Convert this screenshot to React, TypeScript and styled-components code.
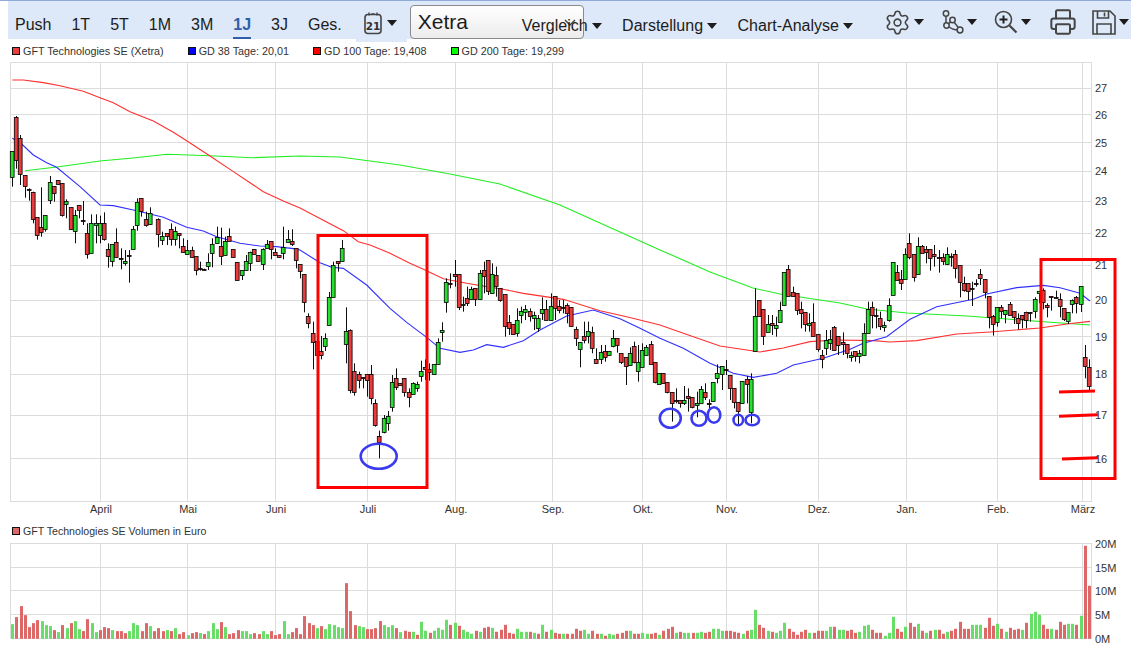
import React from 'react';
import styled, { createGlobalStyle } from 'styled-components';
import { Printer, Settings } from 'lucide-react';

const GlobalStyle = createGlobalStyle`
  html, body {
    margin: 0;
    padding: 0;
    background: #fff;
    font-family: "Liberation Sans", Arial, sans-serif;
    overflow: hidden;
  }
`;

const Page = styled.div`
  width: 1131px;
  height: 654px;
  overflow: hidden;
  border-top: 1px solid #8fa9da;
  box-sizing: border-box;
`;

const Toolbar = styled.div`
  display: flex;
  align-items: center;
  height: 38px;
  margin-left: 8px;
  padding-left: 7px;
  background: #dde8f8;
  color: #1c1c1c;
  font-size: 16px;
`;

const RangeGroup = styled.div`
  display: flex;
  gap: 20px;
`;

const RangeTab = styled.div<{ $active?: boolean }>`
  box-sizing: border-box;
  height: 38px;
  padding-top: 10px;
  line-height: 27px;
  color: ${(p) => (p.$active ? '#2f5fa8' : '#1c1c1c')};
  font-weight: ${(p) => (p.$active ? 'bold' : 'normal')};
  border-bottom: 2px solid ${(p) => (p.$active ? '#2f5fa8' : 'transparent')};
`;

const CalendarTab = styled.div`
  display: flex;
  align-items: center;
  gap: 5px;
  align-self: flex-start;
  width: 51px;
  height: 41px;
  margin-left: 14px;
  padding: 3px 0 0 8px;
  box-sizing: border-box;
  background: #dde8f8;
`;

const Caret = styled.span`
  display: inline-block;
  flex: none;
  width: 0;
  height: 0;
  border-left: 5.5px solid transparent;
  border-right: 5.5px solid transparent;
  border-top: 6px solid #1c1c1c;
`;

const ExchangeSelect = styled.div`
  position: relative;
  flex: none;
  width: 174px;
  height: 34px;
  margin: 4px 0 0 3px;
  padding-left: 7px;
  box-sizing: border-box;
  border: 1px solid #8a8a8a;
  border-radius: 4px;
  background: linear-gradient(#ffffff, #ececec);
  font-size: 21px;
  line-height: 31px;
`;

const SelectChevron = styled.svg`
  position: absolute;
  right: 7px;
  top: 13px;
`;

const MenuGroup = styled.div`
  display: flex;
  gap: 20.5px;
  margin-left: -62px;
  position: relative;
`;

const MenuItem = styled.div`
  display: flex;
  align-items: center;
  gap: 4px;
  padding-top: 11px;
`;

const IconGroup = styled.div`
  display: flex;
  align-items: center;
  gap: 17.5px;
  margin: 4px 0 0 31.5px;
`;

const IconItem = styled.div`
  display: flex;
  align-items: center;
  gap: 3px;
  color: #444;
`;

const Legend = styled.div<{ $height: number; $top: number; $size: number }>`
  display: flex;
  align-items: center;
  gap: 24px;
  box-sizing: border-box;
  height: ${(p) => p.$height}px;
  padding: ${(p) => p.$top}px 0 0 12px;
  font-size: ${(p) => p.$size}px;
  color: #333;
`;

const LegendEntry = styled.div`
  display: flex;
  align-items: center;
  gap: 3px;
`;

const Swatch = styled.span<{ $color: string }>`
  box-sizing: border-box;
  width: 8px;
  height: 8px;
  border: 1px solid #111;
  background: ${(p) => p.$color};
`;

const ChartSvg = styled.svg`
  display: block;
`;

const AxisText = styled.text`
  font-family: "Liberation Sans", Arial, sans-serif;
  font-size: 11px;
  fill: #333;
`;

const GRID = '#dcdcdc';

// candles, read off in crop coordinates: x colour top bottom high low
const seg = (ox: number, oy: number, rows: string) =>
  rows.trim().split(/\s*,\s*/).map((row) => {
    const [x, c, t, b, h, l] = row.trim().split(/\s+/);
    const top = oy + Number(t) / 3;
    const bot = oy + Number(b) / 3;
    return {
      x: ox + Number(x) / 3,
      c,
      top,
      bot,
      hi: h && h !== '0' ? oy + Number(h) / 3 : top,
      lo: l ? oy + Number(l) / 3 : bot,
    };
  });

const candles = [
  ...seg(0, 70, `37 g 244 322 244 350, 49 r 142 270 138 296, 61 r 205 313 195 345, 76 r 316 349 0 383,
    88 r 358 360 355 392, 100 r 367 448 365 460, 112 r 442 496 0 509, 124 r 472 487 352 500, 136 g 436 479 0 485,
    151 g 337 391 318 402, 163 r 349 370 0 395, 175 r 331 343, 187 r 340 437 0 440, 199 g 394 403 388 445,
    214 r 412 478 0 480, 226 g 436 484 420 520, 238 r 406 421 0 445, 250 r 449 451 393 465, 262 r 490 553 460 566,
    274 g 460 550 433 550, 289 g 460 467 433 520, 301 g 460 496 437 520, 313 r 460 508 427 512, 325 r 538 559 520 593,
    337 g 523 574 0 590, 349 r 517 562 475 562, 364 r 563 566 535 598, 376 g 574 580 540 587, 388 r 556 559 540 638,
    400 g 478 538 468 538, 412 g 397 466 385 482, 424 r 385 424 0 440, 439 r 448 466 425 470, 451 g 430 463 412 465,
    475 r 448 493 445 532, 487 g 499 511 485 525, 502 r 490 499 0 525, 514 r 478 508 460 527, 526 g 484 508 470 527,
    538 r 490 496 0 535, 550 r 529 547 505 547, 562 g 541 553 510 555, 577 r 541 562 530 562, 589 r 559 601 0 616,
    601 r 595 598 575 602, 613 r 596 598 0 600, 625 g 577 589 550 600, 637 g 523 550 505 592, 652 g 502 520 470 520,
    664 r 529 559 473 585, 676 g 514 556 500 556, 688 r 499 514 475 514, 700 r 538 562, 712 r 577 631,
    727 g 601 616 0 630, 739 g 574 601 555 601, 751 g 547 580 545 603, 763 r 538 553, 775 r 556 574,
    790 g 538 583 535 600, 802 g 523 535 510 535, 814 r 514 538 0 568, 826 r 547 556 535 556, 838 r 556 562,
    850 g 532 550 470 568, 865 g 508 517 480 517`),
  ...seg(290, 220, `7 r 64 73 28 78, 19 r 85 121 0 145, 31 r 133 154 0 175, 43 r 163 247 0 277, 55 r 289 310 280 325,
    70 r 340 367 305 448, 82 r 364 406 0 435, 94 r 394 406 348 418, 106 g 355 379 340 393, 118 g 232 316 216 316,
    130 g 136 232 125 232, 145 r 124 130 0 155, 157 g 85 124 60 124, 169 g 334 373 262 430, 181 r 331 511 328 520,
    193 r 454 517 430 527, 208 r 463 481 455 505, 220 r 472 475 0 505, 232 r 463 481 0 530, 244 r 463 535 435 553,
    256 r 550 616 538 620, 268 r 649 667 632 715, 283 g 595 637 585 640, 295 g 589 610 573 632, 307 g 487 562 465 575,
    319 r 475 502 445 510, 331 r 490 496, 343 r 475 517 0 530, 358 r 517 532 505 562, 370 g 490 523 487 523,
    382 g 493 505 485 515, 394 g 454 469 422 485, 406 r 440 446 418 480, 418 r 446 454 430 482, 433 g 433 463 0 465,
    445 g 367 433 355 433, 457 g 331 337 307 365, 469 g 187 247 175 278, 481 r 188 190 160 205, 496 r 163 169 120 200,
    508 r 163 262 0 270, 520 g 253 256 230 275, 532 r 235 250 200 258, 544 g 208 238 200 238, 556 r 205 238 0 258,
    571 g 160 238 150 238, 583 r 151 169 125 220, 595 r 121 214 0 225, 607 g 163 220 130 220, 619 r 166 199 140 230,
    631 r 205 241 0 245, 646 r 223 319 0 350, 658 r 307 325 285 345, 670 r 313 343 0 345, 682 g 301 340 265 350,
    694 g 274 286 260 310, 706 g 268 277 255 300, 721 r 274 289 265 305, 733 g 286 295 275 330, 745 g 295 325 285 335,
    757 g 268 280 232 300, 769 r 268 301 240 301, 784 g 259 301 220 301, 796 r 229 265 0 300, 808 r 259 271 240 280,
    820 r 261 263 240 280, 832 r 256 280 250 310, 844 r 262 319 0 320, 859 r 328 355 320 378, 871 g 367 388 0 442,
    883 r 349 361 305 370, 895 g 334 349 305 370`),
  ...seg(560, 260, `97 r 217 265 200 280, 109 r 298 310 265 312, 124 g 277 298 255 312, 136 r 274 292 255 305,
    148 g 274 286, 160 g 235 259 210 262, 172 r 235 256 0 278, 184 r 280 307 0 312, 199 r 292 319 0 375,
    211 g 280 316 262 316, 223 r 259 307 245 310, 235 g 307 334 255 365, 247 g 271 322 250 322, 259 g 262 286 255 286,
    274 r 253 313 243 313, 286 r 307 367 0 370, 298 g 340 373, 310 r 340 370, 322 r 367 397 0 400,
    337 r 397 430 0 485, 349 r 421 424 385 430, 361 r 421 431 0 443, 373 g 421 430 378 435, 385 r 409 415 385 455,
    397 r 412 442 0 445, 412 g 430 436 395 472, 424 g 388 430 378 430, 436 r 397 412 370 420, 448 r 429 431 418 445,
    460 g 367 424 0 425, 472 g 340 355 313 370, 487 g 319 343 0 390, 499 r 326 328 300 345, 511 r 346 385 0 420,
    523 r 385 427 0 445, 535 r 427 455 0 492, 547 g 364 430, 562 r 358 373 348 430, 574 g 358 457 340 490,
    586 g 169 274 85 274, 598 r 121 169, 610 r 148 229 0 255, 625 g 193 217 165 217, 637 r 190 196 165 225,
    649 g 196 205 170 230, 661 g 151 187 125 187, 673 g 37 136, 685 r 28 109 15 109, 700 r 97 109 80 109,
    712 r 100 151 0 165, 724 r 148 160 125 205, 736 r 157 193 0 215, 748 g 190 196 160 215, 760 r 187 229 130 230,
    775 r 223 268 0 275, 787 r 286 298 270 325, 799 g 241 265 210 285, 811 g 238 250 210 270, 823 r 202 271 198 271,
    835 r 229 256 0 285`),
  ...seg(840, 220, `10 r 367 373 337 405, 22 r 373 400 0 415, 34 g 406 412 395 425, 46 r 394 409 0 425, 58 g 400 409 390 430,
    73 g 340 406 310 406, 85 g 268 340 245 340, 97 r 262 286 245 325, 109 r 284 286 265 325, 121 r 295 319 275 330,
    133 g 316 322 305 335, 148 g 256 301 235 305, 160 g 127 226, 172 r 157 181 135 181, 184 r 178 190 150 210,
    196 g 103 178 85 178, 208 r 70 112 40 118, 223 r 103 172 0 185, 235 g 79 163 52 163, 247 r 79 100 75 100,
    259 r 88 97 78 130, 271 r 88 115 0 152, 283 r 103 109 75 140, 298 r 112 115 90 158, 310 r 112 124 100 135,
    322 g 103 133 82 135, 334 r 107 109 100 140, 346 r 103 145 90 175, 361 r 136 187 0 232, 373 r 190 211 170 215,
    385 r 190 214 0 240, 397 r 204 206 185 258, 409 r 188 190 178 200, 421 r 163 175 147 195, 436 r 178 217 0 235,
    448 r 229 292 0 325, 460 r 289 313 285 347, 472 g 262 307 0 320, 484 r 262 274 255 295, 496 g 271 283 0 310,
    511 r 253 286 246 286, 523 r 274 292 0 312, 535 r 295 310 280 328, 547 r 286 298 0 325, 559 r 277 301 275 325,
    571 r 276 278 0 305, 586 g 238 274 232 295, 598 g 214 220 0 250, 610 r 211 247 205 268, 622 r 256 262 250 292,
    634 r 229 232 0 272, 649 r 232 235 212 235, 661 r 238 259 220 292, 673 r 265 298 0 303, 685 g 277 304 0 312,
    697 g 241 253 238 280, 709 r 232 250 228 280, 724 g 199 253 0 276, 736 r 412 439 375 475, 748 r 442 499 418 516`),
];

const pts = (ox: number, oy: number, rows: number[][]) =>
  rows.map(([x, y]) => `${ox + x / 3},${oy + y / 3}`).join(' ');

const gd100 = [
  pts(0, 70, [[37, 30], [70, 30], [130, 38], [180, 47], [250, 64], [300, 83], [340, 98], [390, 125], [460, 153], [520, 187], [560, 212], [630, 258], [700, 305], [790, 365], [850, 393], [900, 414]]),
  pts(290, 220, [[160, 32], [205, 65], [240, 75], [300, 100], [360, 130], [410, 152], [460, 176], [530, 190], [640, 208], [700, 220], [820, 238]]),
  pts(560, 260, [[120, 152], [200, 170], [300, 195], [400, 230], [480, 258], [600, 276], [670, 264], [750, 245], [830, 240]]),
  pts(840, 220, [[100, 362], [150, 366], [230, 362], [350, 342], [450, 336], [600, 324], [680, 312], [750, 304]]),
].join(' ');

const gd38 = [
  pts(0, 70, [[37, 205], [65, 222], [100, 255], [140, 278], [170, 292], [240, 350], [300, 405], [340, 407], [400, 420], [490, 442], [560, 472], [610, 483], [650, 500], [720, 520], [780, 528], [830, 530], [880, 536]]),
  pts(290, 220, [[30, 90], [90, 128], [125, 142], [160, 145], [230, 195], [300, 265], [350, 307], [410, 352], [450, 385], [510, 397], [550, 390], [590, 374], [640, 382], [700, 362], [750, 330], [830, 288]]),
  pts(560, 260, [[100, 150], [180, 176], [240, 205], [300, 235], [370, 265], [450, 310], [520, 340], [580, 352], [650, 340], [700, 315], [790, 295], [870, 268]]),
  pts(840, 220, [[70, 370], [140, 350], [210, 298], [290, 260], [400, 238], [440, 222], [530, 203], [610, 196], [660, 203], [720, 220], [750, 243]]),
].join(' ');

const gd200 = '25,170.7 57,167 100,161 133,158 167,154.3 210,155.7 253,157.7 300,156 340,157 400,165 450,174 500,184 560,205 620,232 660,250 683,260 710,272 753,288 780,294 840,303 867,309 907,313 967,316 1007,319 1047,322 1090,325';

const priceLines = [
  [88, 27], [114.5, 26], [142.5, 25], [171, 24], [201, 23], [233, 22], [265, 21], [300, 20], [336.5, 19], [374, 18], [415, 17], [458.5, 16],
];

const monthLines = [
  [100, 'April'], [187, 'Mai'], [275, 'Juni'], [367, 'Juli'], [455, 'Aug.'], [552, 'Sep.'], [642, 'Okt.'], [726, 'Nov.'], [818, 'Dez.'], [906, 'Jan.'], [997, 'Feb.'], [1082, 'März'],
] as [number, string][];

const volumeRows = `g44 r65 r98 r71 r35 r47 r56 g53 g41 g38 r26 g20 r41 g32 r47 g53 g29 r23 r59 g47 g20 r26 r35 r32 g26 r23 r23 r17 g23 g47 g41 r23 r47 g38 r23 r32 r23 g26 r23 g32 r14 r20 g11 r17 r20 g17 r14 g23 g47 g29 r50 g35 r14 r17 r26 g23 g23 g14 r17 r14 g23 g14 r23 r11 r14 g53 g14 r20 r32 r14 r68 r47 r41 g32 r38 g29 g44 g41 g35 g32 r167 r83 r41 g38 g35 r29 r29 r32 r53 g41 g35 g41 r32 g20
 r24 r21 g21 r12 g51 g24 r18 g24 g33 g27 g57 r42 g48 r39 g27 g21 g15 r24 g21 r33 r36 g33 r21 r27 r42 r18 r15 g30 g21 g21 r21 g18 r15 g42 r21 g27 r18 r15 g15 r15 r15 r30 r24 g27 g15 r24 r15 g15 r9 g15 g12 r15 r18 r24 g24 r15 r15 g18 g15 r15 r18 g12 r24 r30 r36 g18 r21 g18 g18 r18 g18 g21 r18 r21 g30 g30 g24 r24 r24 r21 r18 g15 r24 g27 g87 r42 r33 g24 r21 g18 g24
 g48 r30 r21 r12 r21 r27 g18 r18 r24 r24 g24 g36 r36 g27 g27 r24 r27 r18 g21 g39 g42 r27 r18 r18 g9 g18 g66 r30 r21 g36 r48 r36 g45 r24 g18 r24 g27 r27 r15 g21 r24 r30 r51 r30 r30 g42 g42 g42 r33 r63 r39 g45 r30 g21 r33 r27 r30 g27 r48 g75 g81 g72 r42 r30 g30 r27 r51 r42 g45 g45 r42 g69 r279 r159`;

const volumes = volumeRows.trim().split(/\s+/).map((v) => ({ c: v[0], h: Number(v.slice(1)) / 3 }));
const volumeStep = (1089 - 12.3) / (volumes.length - 1);

const volumeLines = [
  [543.5, '20M'], [567.5, '15M'], [590.5, '10M'], [614.5, '5M'], [638.5, '0M'],
] as [number, string][];

const CalendarIcon = () => (
  <svg width="18" height="24" viewBox="0 0 18 24">
    <rect x="1" y="3.5" width="16" height="19" rx="3" fill="none" stroke="#444" strokeWidth="1.6" />
    <path d="M5 1.5v3M13 1.5v3M7.5 3h3" stroke="#444" strokeWidth="1.4" />
    <text x="9" y="19" textAnchor="middle" fontSize="10.5" fontWeight="bold" fontFamily="DejaVu Sans, sans-serif" fill="#333">21</text>
  </svg>
);

const NetworkIcon = () => (
  <svg width="22" height="24" viewBox="0 0 22 24" fill="none" stroke="#444" strokeWidth="1.5">
    <circle cx="4" cy="3.5" r="2.7" />
    <circle cx="4.5" cy="15.5" r="2.7" />
    <circle cx="10.5" cy="10" r="2.7" />
    <circle cx="18" cy="20" r="2.9" />
    <path d="M4 6.2v6.6M6.6 13.7l2-1.7M12.2 12.2l4.2 5.4M7 17c2.6 2 5 2.8 8.2 3" />
  </svg>
);

const ZoomIcon = () => (
  <svg width="24" height="24" viewBox="0 0 24 24" fill="none" stroke="#444">
    <circle cx="9.5" cy="9.5" r="8" strokeWidth="1.6" />
    <path d="M9.5 5.5v8M5.5 9.5h8" strokeWidth="2" stroke="#222" />
    <path d="M15.5 15.5l7 7" strokeWidth="2.2" />
  </svg>
);

const SaveItem = styled(IconItem)`
  margin-left: -2px;
`;

const SaveIcon = () => (
  <svg width="24" height="25" viewBox="0 0 24 25" fill="none" stroke="#444" strokeWidth="1.6">
    <path d="M1 1h17l5 5v18H1z" />
    <path d="M5.5 1v7h11V1M12.5 2.5v4" />
    <path d="M5 24V14h14v10" />
  </svg>
);

const PriceChart = () => (
  <ChartSvg width="1131" height="456" viewBox="0 62 1131 456">
    <g stroke={GRID} strokeWidth="1" shapeRendering="crispEdges">
      <line x1="10" y1="62.5" x2="1092" y2="62.5" />
      <line x1="10" y1="501.5" x2="1092" y2="501.5" />
      <line x1="10.5" y1="62" x2="10.5" y2="502" />
      <line x1="1091.5" y1="62" x2="1091.5" y2="502" />
      {priceLines.map(([y]) => (
        <line key={y} x1="10" x2="1092" y1={Math.floor(y) + 0.5} y2={Math.floor(y) + 0.5} />
      ))}
      {monthLines.map(([x]) => (
        <line key={x} y1="62" y2="502" x1={x + 0.5} x2={x + 0.5} />
      ))}
    </g>
    <polyline points={gd200} fill="none" stroke="#22ee22" strokeWidth="1.1" />
    <polyline points={gd100} fill="none" stroke="#ff3030" strokeWidth="1.1" />
    <polyline points={gd38} fill="none" stroke="#3030ff" strokeWidth="1.1" />
    <g>
      {candles.map((k) => {
        const a = Math.round(k.x - 2);
        return (
          <g key={k.x}>
            <line x1={a + 2.5} x2={a + 2.5} y1={k.hi} y2={k.lo} stroke="#000" strokeWidth="0.95" />
            <rect
              x={a + 0.3}
              y={Math.round(k.top) + 0.5}
              width="3.8"
              height={Math.max(1, Math.round(k.bot - k.top))}
              fill={k.c === 'r' ? '#e83b3b' : '#25e02c'}
              stroke="#000"
              strokeWidth="0.8"
            />
          </g>
        );
      })}
    </g>
    <g fill="none" stroke="#ff0000" strokeWidth="3">
      <rect x="318" y="235.5" width="109" height="252" />
      <rect x="1041" y="259.5" width="74" height="219" />
      <path d="M1059 392L1095 391M1059 416.3L1098 414.8M1062 459L1098 457.7" />
    </g>
    <g fill="none" stroke="#3a3aee" strokeWidth="2.6">
      <ellipse cx="378.7" cy="456.3" rx="18" ry="12.5" />
      <ellipse cx="670.3" cy="418.3" rx="10.5" ry="9.5" />
      <ellipse cx="699" cy="418.3" rx="7.5" ry="7.5" />
      <ellipse cx="714" cy="415" rx="6.3" ry="7.8" />
      <ellipse cx="738.3" cy="420" rx="4.8" ry="5.2" />
      <ellipse cx="752.3" cy="420" rx="6.8" ry="5.2" />
    </g>
    {priceLines.map(([y, label]) => (
      <AxisText key={label} x="1095" y={y + 4}>{label}</AxisText>
    ))}
    {monthLines.map(([x, label]) => (
      <AxisText key={label} x={x + 1} y="513" textAnchor="middle">{label}</AxisText>
    ))}
  </ChartSvg>
);

const VolumeChart = () => (
  <ChartSvg width="1131" height="118" viewBox="0 536 1131 118">
    <g stroke={GRID} strokeWidth="1" shapeRendering="crispEdges">
      <line x1="10.5" y1="543" x2="10.5" y2="639" />
      <line x1="1091.5" y1="543" x2="1091.5" y2="639" />
      {volumeLines.map(([y]) => (
        <line key={y} x1="10" x2="1092" y1={Math.floor(y) + 0.5} y2={Math.floor(y) + 0.5} />
      ))}
      {monthLines.map(([x]) => (
        <line key={x} y1="543" y2="639" x1={x + 0.5} x2={x + 0.5} />
      ))}
    </g>
    {volumes.map((v, i) => (
      <rect
        key={i}
        x={Math.round(12.3 + i * volumeStep) - 1}
        y={638.8 - v.h}
        width="3"
        height={v.h}
        fill={v.c === 'r' ? '#dd6868' : '#68dd68'}
      />
    ))}
    {volumeLines.map(([y, label]) => (
      <AxisText key={label} x="1095" y={y + 4}>{label}</AxisText>
    ))}
  </ChartSvg>
);

const ranges = ['Push', '1T', '5T', '1M', '3M', '1J', '3J', 'Ges.'];
const menus = ['Vergleich', 'Darstellung', 'Chart-Analyse'];

const App = () => (
  <Page>
    <GlobalStyle />
    <Toolbar>
      <RangeGroup>
        {ranges.map((r) => (
          <RangeTab key={r} $active={r === '1J'}>{r}</RangeTab>
        ))}
      </RangeGroup>
      <CalendarTab>
        <CalendarIcon />
        <Caret />
      </CalendarTab>
      <ExchangeSelect>
        Xetra
        <SelectChevron width="12" height="8" viewBox="0 0 12 8">
          <path d="M1 1l5 5 5-5" fill="none" stroke="#444" strokeWidth="1.4" />
        </SelectChevron>
      </ExchangeSelect>
      <MenuGroup>
        {menus.map((m) => (
          <MenuItem key={m}>{m}<Caret /></MenuItem>
        ))}
      </MenuGroup>
      <IconGroup>
        <IconItem><Settings size={27} strokeWidth={1.4} /><Caret /></IconItem>
        <IconItem><NetworkIcon /><Caret /></IconItem>
        <IconItem><ZoomIcon /><Caret /></IconItem>
        <IconItem><Printer size={28} strokeWidth={1.7} /></IconItem>
        <SaveItem><SaveIcon /><Caret /></SaveItem>
      </IconGroup>
    </Toolbar>
    <Legend $height={23} $top={1} $size={10.8}>
      <LegendEntry><Swatch $color="#e84040" />GFT Technologies SE (Xetra)</LegendEntry>
      <LegendEntry><Swatch $color="#0000ff" />GD 38 Tage: 20,01</LegendEntry>
      <LegendEntry><Swatch $color="#ff0000" />GD 100 Tage: 19,408</LegendEntry>
      <LegendEntry><Swatch $color="#00ff00" />GD 200 Tage: 19,299</LegendEntry>
    </Legend>
    <PriceChart />
    <Legend $height={18} $top={8} $size={10.6}>
      <LegendEntry><Swatch $color="#dd6868" />GFT Technologies SE Volumen in Euro</LegendEntry>
    </Legend>
    <VolumeChart />
  </Page>
);

export default App;
